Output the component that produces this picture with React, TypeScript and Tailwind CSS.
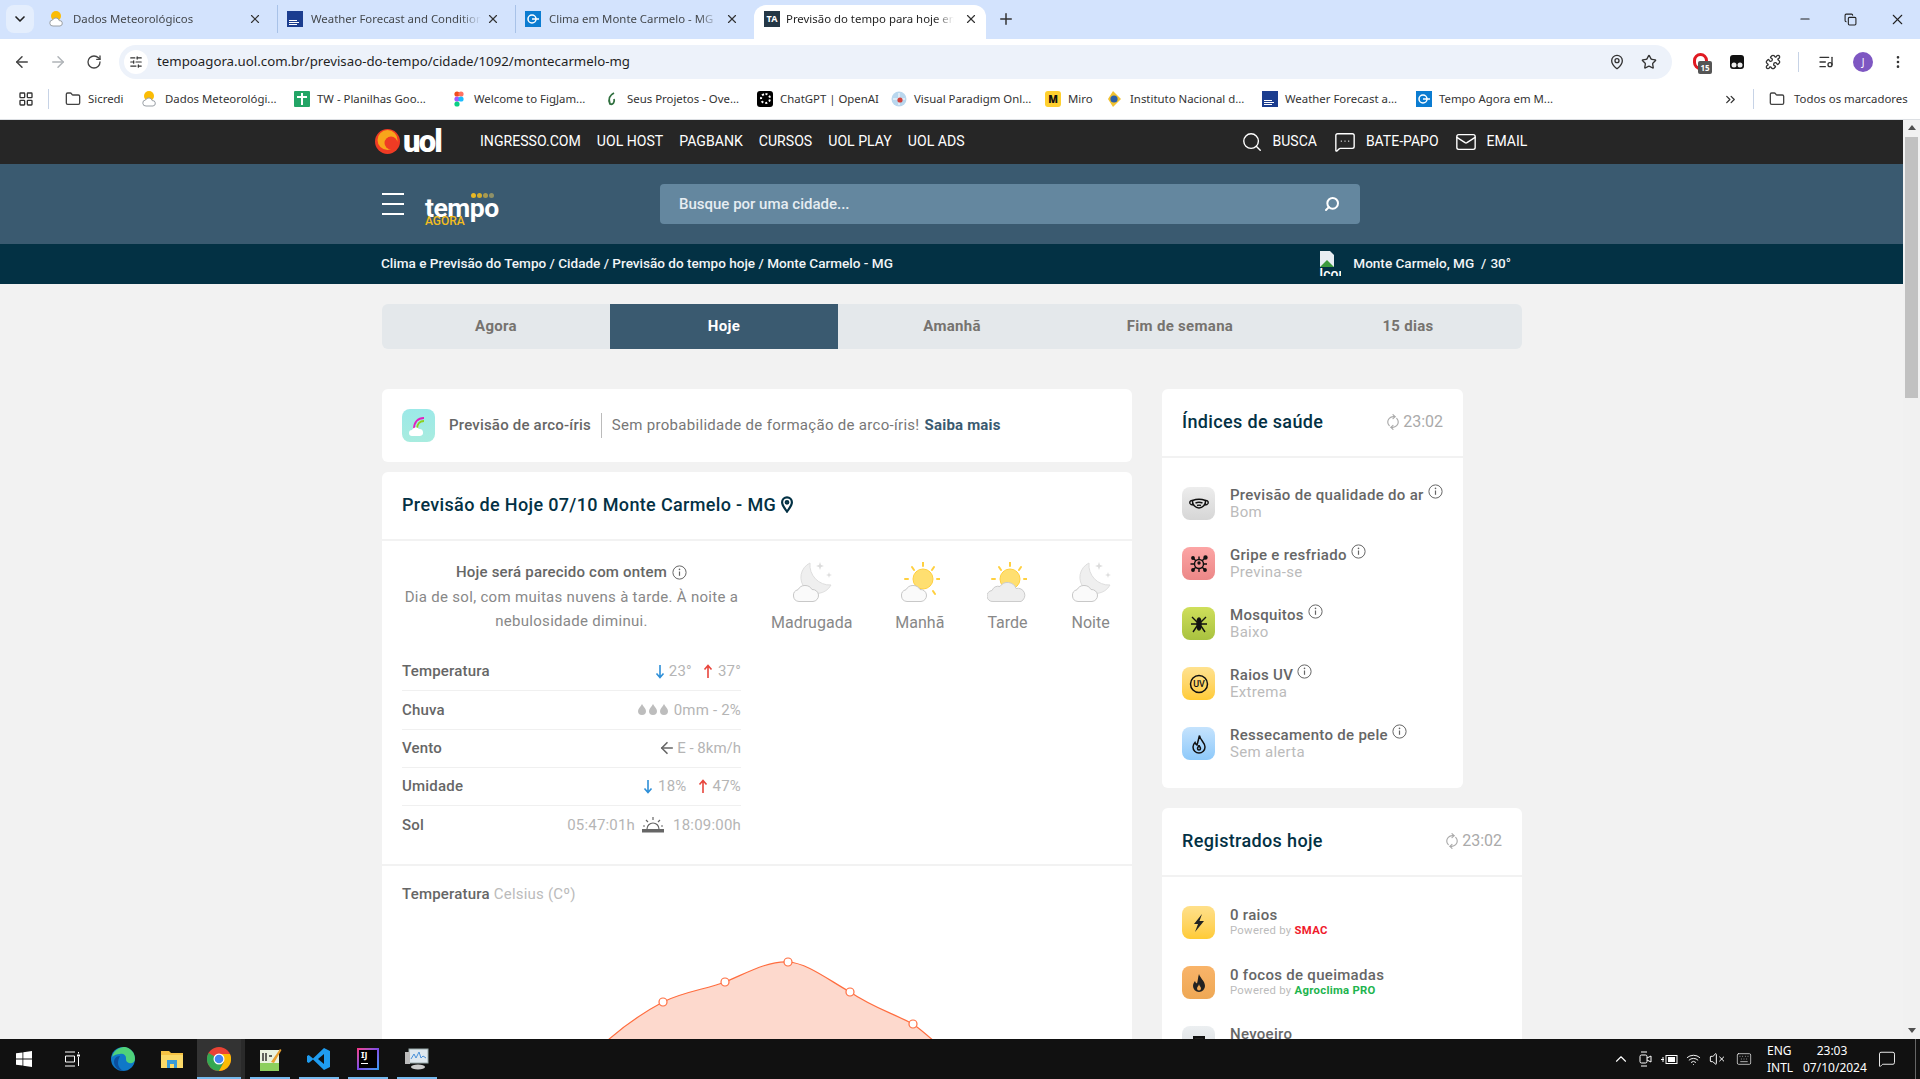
import {
  ArrowLeft, ArrowRight, ChevronDown, ChevronUp, ChevronsRight, Copy, EllipsisVertical, Folder, Keyboard,
  LayoutGrid, ListMusic, Mail, MapPin, MessageSquare, MessageSquareMore, Minus, Plus, Puzzle,
  RefreshCw, RotateCw, Search, SlidersHorizontal, Star, VolumeX, Wifi, X,
} from 'lucide-react';
import type { ReactNode } from 'react';

const SunCloudFavicon = () => (
  <svg className="w-4 h-4 shrink-0" viewBox="0 0 16 16">
    <circle cx="7" cy="5" r="5" fill="#fbbc04" />
    <path d="M4 15a3 3 0 0 1-.4-6 3.5 3.5 0 0 1 6.6.6A2.7 2.7 0 0 1 11 15z" fill="#fff" stroke="#9aa0a6" />
  </svg>
);

const TwcFavicon = () => (
  <span className="w-4 h-4 shrink-0 bg-[#1b3d8f] flex flex-col justify-end gap-px p-0.5">
    <span className="block h-px w-2 bg-white" />
    <span className="block h-px w-2.5 bg-white" />
    <span className="block h-px w-2 bg-white" />
  </span>
);

const TempoFavicon = () => (
  <svg className="w-4 h-4 shrink-0" viewBox="0 0 16 16">
    <rect width="16" height="16" fill="#0b7cd1" />
    <circle cx="7" cy="8" r="4" fill="none" stroke="#fff" strokeWidth="1.5" />
    <path d="M7 8h7" stroke="#fff" strokeWidth="1.5" />
  </svg>
);

const TaFavicon = () => (
  <span className="w-4 h-4 shrink-0 bg-[#243746] text-white text-[9px] leading-4 font-bold text-center">TA</span>
);

const tabs = [
  { title: 'Dados Meteorológicos', icon: <SunCloudFavicon /> },
  { title: 'Weather Forecast and Conditions', icon: <TwcFavicon /> },
  { title: 'Clima em Monte Carmelo - MG', icon: <TempoFavicon /> },
];

const ChromeTab = ({ title, icon }: { title: string; icon: ReactNode }) => (
  <div className="w-[238px] h-[28px] flex items-center pl-[9px] pr-[3px] border-r border-[#a8c2e8] [&:nth-child(3)]:border-r-0">
    {icon}
    <span className="ml-2 w-[170px] overflow-hidden whitespace-nowrap text-[11.4px] text-[#44484c] [mask-image:linear-gradient(to_right,black_88%,transparent)]">{title}</span>
    <X className="ml-auto mr-[12px] w-[14px] h-[14px] text-[#333]" />
  </div>
);

const bookmarks: { label: string; icon: ReactNode; width: string }[] = [
  { label: 'Sicredi', width: 'w-[77px]', icon: <Folder className="w-4 h-4 text-[#444] shrink-0" /> },
  { label: 'Dados Meteorológi...', width: 'w-[152px]', icon: <SunCloudFavicon /> },
  {
    label: 'TW - Planilhas Goo...',
    width: 'w-[157px]',
    icon: (
      <svg className="w-4 h-4 shrink-0" viewBox="0 0 16 16">
        <rect width="16" height="16" rx="1" fill="#23a566" />
        <path d="M8 2v12M3 6h10" stroke="#fff" strokeWidth="2" />
      </svg>
    ),
  },
  {
    label: 'Welcome to FigJam...',
    width: 'w-[153px]',
    icon: (
      <svg className="w-4 h-4 shrink-0" viewBox="0 0 16 16">
        <circle cx="6" cy="3" r="2.6" fill="#f24e1e" />
        <circle cx="10" cy="3" r="2.6" fill="#ff7262" />
        <circle cx="6" cy="8" r="2.6" fill="#a259ff" />
        <circle cx="10" cy="8" r="2.6" fill="#1abcfe" />
        <circle cx="6" cy="13" r="2.6" fill="#0acf83" />
      </svg>
    ),
  },
  {
    label: 'Seus Projetos - Ove...',
    width: 'w-[153px]',
    icon: (
      <svg className="w-4 h-4 shrink-0" viewBox="0 0 16 16">
        <path d="M10 2C6 4 4 8 6 13c3 1 5-2 4-5" fill="none" stroke="#2f6f3e" strokeWidth="1.8" />
      </svg>
    ),
  },
  {
    label: 'ChatGPT | OpenAI',
    width: 'w-[134px]',
    icon: (
      <span className="w-4 h-4 shrink-0 rounded-[3px] bg-black flex items-center justify-center">
        <span className="w-[11px] h-[11px] rounded-full border-2 border-dotted border-white" />
      </span>
    ),
  },
  {
    label: 'Visual Paradigm Onl...',
    width: 'w-[154px]',
    icon: (
      <svg className="w-4 h-4 shrink-0" viewBox="0 0 16 16">
        <circle cx="8" cy="8" r="7.5" fill="#b9d7ee" />
        <path d="M8 2v12M2 8h12" stroke="#fff" />
        <circle cx="9" cy="9" r="2.6" fill="#d0403c" />
      </svg>
    ),
  },
  {
    label: 'Miro',
    width: 'w-[62px]',
    icon: (
      <span className="w-4 h-4 shrink-0 rounded-[3px] bg-[#ffd02f] flex items-center justify-center">
        <span className="text-[10px] leading-none font-black text-[#111]">M</span>
      </span>
    ),
  },
  {
    label: 'Instituto Nacional d...',
    width: 'w-[155px]',
    icon: (
      <svg className="w-4 h-4 shrink-0" viewBox="0 0 16 16">
        <path d="M6 0l8 8-8 8-5-8z" fill="#f2c230" />
        <circle cx="7" cy="8" r="3.6" fill="#2b5fa8" />
      </svg>
    ),
  },
  { label: 'Weather Forecast a...', width: 'w-[154px]', icon: <TwcFavicon /> },
  { label: 'Tempo Agora em M...', width: 'w-[150px]', icon: <TempoFavicon /> },
];

const BrowserChrome = () => (
  <div className="shrink-0 [font-family:'Noto_Sans',sans-serif]">
    <div className="h-[39px] bg-[#d3e3fd] flex pt-[5px] relative">
      <div className="ml-[6px] w-[28px] h-[28px] rounded-lg bg-[#e4eefd] flex items-center justify-center">
        <ChevronDown className="w-4 h-4 text-[#222]" strokeWidth={2.5} />
      </div>
      <div className="ml-[6px] flex">
        {tabs.map((tab) => (
          <ChromeTab key={tab.title} {...tab} />
        ))}
      </div>
      <div className="w-[232px] h-[34px] bg-white rounded-t-xl flex items-center pl-[10px] pb-[6px]">
        <TaFavicon />
        <span className="ml-[6px] w-[168px] overflow-hidden whitespace-nowrap text-[11.4px] text-[#1f1f1f] [mask-image:linear-gradient(to_right,black_88%,transparent)]">
          Previsão do tempo para hoje em Monte
        </span>
        <X className="ml-[10px] w-[14px] h-[14px] text-[#333]" />
      </div>
      <Plus className="ml-[11px] mt-[5px] w-[18px] h-[18px] text-[#333]" />
      <div className="ml-auto flex items-center h-[28px] mr-[14px] gap-[32px] text-[#222]">
        <Minus className="w-[14px] h-[14px]" />
        <Copy className="w-[13px] h-[13px]" />
        <X className="w-[17px] h-[17px]" strokeWidth={1.5} />
      </div>
    </div>

    <div className="h-[46px] bg-white flex items-center">
      <ArrowLeft className="ml-[13px] w-[18px] h-[18px] text-[#444]" />
      <ArrowRight className="ml-[18px] w-[18px] h-[18px] text-[#b0b4b8]" />
      <RotateCw className="ml-[19px] w-[16px] h-[16px] text-[#444]" />
      <div className="ml-[17px] w-[1553px] h-[34px] rounded-full bg-[#edf2fa] flex items-center pl-[5px]">
        <span className="w-[24px] h-[24px] rounded-full bg-white flex items-center justify-center">
          <SlidersHorizontal className="w-[14px] h-[14px] text-[#333]" />
        </span>
        <span className="ml-[9px] text-[13.25px] text-[#1f1f1f]">tempoagora.uol.com.br/previsao-do-tempo/cidade/1092/montecarmelo-mg</span>
        <MapPin className="ml-auto w-[16px] h-[16px] text-[#333]" />
        <Star className="ml-[16px] mr-[15px] w-[16px] h-[16px] text-[#333]" />
      </div>
      <div className="ml-[21px] relative w-[18px] h-[18px]">
        <span className="block w-[15px] h-[17px] rounded-full border-[3px] border-[#e01a22]" />
        <span className="absolute left-[5px] top-[8px] w-[14px] h-[13px] rounded-[2px] bg-[#555] text-white text-[8px] leading-[13px] font-bold text-center">15</span>
      </div>
      <svg className="ml-[18px] w-[16px] h-[16px]" viewBox="0 0 16 16">
        <rect x="1" y="1" width="14" height="14" rx="3" fill="#111" />
        <circle cx="5" cy="11" r="2.5" fill="#eee" />
        <circle cx="11" cy="11" r="2.5" fill="#eee" />
      </svg>
      <Puzzle className="ml-[20px] w-[16px] h-[16px] text-[#333]" />
      <span className="ml-[17px] w-px h-[20px] bg-[#c7d3e6]" />
      <ListMusic className="ml-[19px] w-[16px] h-[16px] text-[#333]" />
      <span className="ml-[19px] w-[20px] h-[20px] rounded-full bg-[#7e57c2] text-white text-[10px] leading-5 text-center">J</span>
      <EllipsisVertical className="ml-[17px] w-[16px] h-[16px] text-[#333]" />
    </div>

    <div className="h-[35px] pb-[6px] bg-white border-b border-[#dcdfe3] flex items-center text-[11.4px] text-[#333]">
      <LayoutGrid className="ml-[18px] w-[16px] h-[16px] text-[#333]" />
      <span className="ml-[14px] w-px h-[20px] bg-[#c7d3e6]" />
      <div className="ml-[16px] flex">
        {bookmarks.map(({ label, width, icon }) => (
          <div key={label} className={`${width} flex items-center gap-[7px] whitespace-nowrap overflow-hidden`}>
            {icon}
            <span>{label}</span>
          </div>
        ))}
      </div>
      <ChevronsRight className="ml-[157px] w-[15px] h-[15px] text-[#333]" />
      <span className="ml-[15px] w-px h-[20px] bg-[#c7d3e6]" />
      <Folder className="ml-[15px] w-4 h-4 text-[#444]" />
      <span className="ml-[9px] whitespace-nowrap">Todos os marcadores</span>
    </div>
  </div>
);

const UolLogo = () => (
  <div className="flex items-center">
    <svg className="w-[25px] h-[25px]" viewBox="0 0 25 25">
      <circle cx="12.5" cy="12.5" r="12.5" fill="#ef3b24" />
      <circle cx="12.5" cy="11" r="10" fill="#f8a51b" />
      <circle cx="16" cy="14" r="6.5" fill="#ef3b24" />
    </svg>
    <span className="ml-[3px] text-[31px] leading-none font-black tracking-[-1.8px] text-white">uol</span>
  </div>
);

const UolBar = () => (
  <div className="h-[44px] pb-[1px] bg-[#262626] shrink-0 flex items-center text-white text-[14.1px] whitespace-nowrap pl-[375px]">
    <div className="w-[67px]">
      <UolLogo />
    </div>
    <div className="ml-[38px] flex gap-[16px]">
      {['INGRESSO.COM', 'UOL HOST', 'PAGBANK', 'CURSOS', 'UOL PLAY', 'UOL ADS'].map((item) => (
        <span key={item}>{item}</span>
      ))}
    </div>
    <div className="ml-[276px] flex items-center text-[14px]">
      <Search className="w-[22px] h-[22px]" strokeWidth={1.5} />
      <span className="ml-[10px]">BUSCA</span>
      <MessageSquareMore className="ml-[17px] w-[22px] h-[22px]" strokeWidth={1.5} />
      <span className="ml-[10px]">BATE-PAPO</span>
      <Mail className="ml-[16px] w-[22px] h-[22px]" strokeWidth={1.5} />
      <span className="ml-[10px]">EMAIL</span>
    </div>
  </div>
);

const TempoLogo = () => (
  <div className="relative w-[76px] h-[34px] ml-[21px] mt-[12px]">
    <span className="absolute left-[46px] top-0 flex gap-[1px]">
      <span className="w-[5px] h-[5px] rounded-full bg-[#e9b824]" />
      <span className="w-[5px] h-[5px] rounded-full bg-[#d5ad2c]" />
      <span className="w-[5px] h-[5px] rounded-full bg-[#a99a4e]" />
      <span className="w-[5px] h-[5px] rounded-full bg-[#8f9168]" />
    </span>
    <span className="absolute left-0 top-[1px] text-[26.5px] leading-[27px] font-bold tracking-[-0.5px] text-white">tempo</span>
    <span className="absolute left-0 top-[23px] text-[12px] leading-[11px] font-medium text-[#f3bd1e]">AGORA</span>
  </div>
);

const SiteHeader = () => (
  <>
    <div className="h-[80px] bg-[#3a5a70] shrink-0 flex items-center pl-[382px]">
      <div className="w-[22px] flex flex-col gap-[8px]">
        <span className="block h-[2px] bg-white" />
        <span className="block h-[2px] bg-white" />
        <span className="block h-[2px] bg-white" />
      </div>
      <TempoLogo />
      <div className="ml-[159px] w-[700px] h-[40px] rounded bg-[#64879f] flex items-center pl-[19px] pr-[20px]">
        <span className="text-[15px] font-medium text-[#e6edf2]">Busque por uma cidade...</span>
        <Search className="ml-auto w-[16px] h-[16px] text-white -scale-x-100" strokeWidth={3} />
      </div>
    </div>
    <div className="h-[40px] pb-[1px] bg-[#033144] shrink-0 flex items-center pl-[381px] text-[13.55px] font-medium text-[#f2f5f7] whitespace-nowrap">
      <span>Clima e Previsão do Tempo / Cidade / Previsão do tempo hoje / Monte Carmelo - MG</span>
      <div className="ml-auto mr-[392px] flex items-center">
        <div className="w-[22px] h-[25px] overflow-hidden">
          <svg className="w-[16px] h-[16px]" viewBox="0 0 16 16">
            <path d="M1 0h10l4 4v12H1z" fill="#e8edf2" />
            <path d="M1 16l7-7 7 7z" fill="#3d9a3d" />
          </svg>
          <span className="block text-[14px] leading-[14px] text-white">Icon</span>
        </div>
        <span className="ml-[12px]">Monte Carmelo, MG</span>
        <span className="ml-[7px]">/</span>
        <span className="ml-[4px]">30°</span>
      </div>
    </div>
  </>
);

const InfoIcon = () => (
  <svg className="w-[15px] h-[15px] shrink-0 text-[#666]" viewBox="0 0 15 15" fill="none" stroke="currentColor">
    <circle cx="7.5" cy="7.5" r="6.6" />
    <path d="M7.5 6.5v4.3" strokeWidth="1.2" />
    <circle cx="7.5" cy="4.4" r=".8" fill="currentColor" stroke="none" />
  </svg>
);

const SmallCloud = () => (
  <path
    d="M7 39.500a6 6 0 0 1-1-11.800A8 8 0 0 1 20 27.500a6 6 0 0 1 1 12z"
    fill="#fafafa"
    stroke="#c8c8c8"
    strokeWidth="1"
  />
);

const MoonIcon = () => (
  <svg className="w-[40px] h-[40px]" viewBox="0 0 40 40">
    <path d="M18 1A16 16 0 1 0 39 23A20 20 0 0 1 18 1z" fill="#efefef" stroke="#dedede" />
    <path d="M28 0l1 3 3 1-3 1-1 3-1-3-3-1 3-1zM37 10l.7 2.300 2.300.7-2.300.7-.7 2.300-.7-2.300-2.300-.7 2.300-.7z" fill="#dcdcdc" />
    <SmallCloud />
  </svg>
);

const SunIcon = ({ bigCloud }: { bigCloud?: boolean }) => (
  <svg className="w-[40px] h-[40px]" viewBox="0 0 40 40">
    <g stroke="#ffd040" strokeWidth="2" strokeLinecap="round">
      <path d="M23 0v4M12 5l2 3M34 5l-2 3M5 17h3M37 17h3M33 29l2 3" />
    </g>
    <circle cx="23" cy="17" r="10" fill="#ffdf70" stroke="#ffd040" />
    {bigCloud ? (
      <path
        d="M6 39.500a5.500 5.500 0 0 1-1-11 7 7 0 0 1 8-4 9 9 0 0 1 16 2 7 7 0 0 1 5 13z"
        fill="#eeeeee"
        stroke="#cccccc"
      />
    ) : (
      <SmallCloud />
    )}
  </svg>
);

const ArrowDown = () => (
  <svg className="w-[10px] h-[15px] shrink-0" viewBox="0 0 10 15" fill="none" stroke="#2e8fd8" strokeWidth="1.6">
    <path d="M5 1v12M1.500 9.500L5 13.500l3.500-4" />
  </svg>
);

const ArrowUp = () => (
  <svg className="w-[10px] h-[15px] shrink-0" viewBox="0 0 10 15" fill="none" stroke="#e8453c" strokeWidth="1.6">
    <path d="M5 14V2M1.500 5.500L5 1.500l3.500 4" />
  </svg>
);

const Drop = () => (
  <svg className="w-[8px] h-[11px]" viewBox="0 0 8 11">
    <path d="M4 0c1 2.500 4 4.500 4 7a4 4 0 0 1-8 0c0-2.500 3-4.500 4-7z" fill="#bdbdbd" />
  </svg>
);

const SunsetIcon = () => (
  <svg className="w-[22px] h-[16px] ml-[7px] mr-[9px] shrink-0" viewBox="0 0 22 16" fill="none" stroke="#666">
    <path d="M11 0v3M4 3l2 2M18 3l-2 2M1 9h2M19 9h2" strokeWidth="1.200" />
    <path d="M5 12a6 6 0 0 1 12 0" strokeWidth="1.200" />
    <rect x="0" y="12" width="22" height="3.500" fill="#666" stroke="none" />
  </svg>
);

const ForecastRow = ({ label, last, children }: { label: string; last?: boolean; children: ReactNode }) => (
  <div className={`h-[38.300px] flex items-center justify-between ${last ? '' : 'border-b border-[#f0f0f0]'}`}>
    <span className="text-[15px] font-medium tracking-[0.2px] text-[#666]">{label}</span>
    <div className="flex items-center text-[15px] text-[#b5b5b5] tracking-[0.2px]">{children}</div>
  </div>
);

const periods = [
  { label: 'Madrugada', icon: <MoonIcon /> },
  { label: 'Manhã', icon: <SunIcon /> },
  { label: 'Tarde', icon: <SunIcon bigCloud /> },
  { label: 'Noite', icon: <MoonIcon /> },
];

const chartPoints = [
  [281, 81],
  [343, 61],
  [406, 41],
  [468, 71],
  [531, 103],
];

const TemperatureChart = () => {
  const line = 'M165 190C200 135 245 100 281 81C300 71 325 68 343 61C365 52 385 40 406 41C425 42 445 58 468 71C490 86 510 92 531 103C555 120 600 165 640 200';
  return (
    <svg className="block w-[750px] h-[190px] mt-[15px]" viewBox="0 0 750 190">
      <path d={`${line}Z`} fill="#fdd9cd" />
      <path d={line} fill="none" stroke="#ff6d3f" strokeWidth="1.200" />
      {chartPoints.map(([x, y]) => (
        <circle key={x} cx={x} cy={y} r="4" fill="#fff" stroke="#ff6d3f" strokeWidth="1.200" />
      ))}
    </svg>
  );
};

const MainColumn = () => (
  <div className="w-[750px] shrink-0">
    <div className="h-[73px] bg-white rounded-md flex items-center pl-[20px]">
      <svg className="w-[33px] h-[33px] shrink-0" viewBox="0 0 33 33">
        <defs>
          <linearGradient id="rainbowBg" x1="0" y1="0" x2="0" y2="1">
            <stop offset="0" stopColor="#9ce9e8" />
            <stop offset="1" stopColor="#a8ecdf" />
          </linearGradient>
        </defs>
        <rect width="33" height="33" rx="8" fill="url(#rainbowBg)" />
        <path d="M12 20c0-7 4-11 10-11" fill="none" stroke="#e020c0" strokeWidth="2" />
        <path d="M15 20c0-5 3-8 7-8" fill="none" stroke="#8fd020" strokeWidth="2" />
        <path d="M10 27a3 3 0 0 1 0-6 4 4 0 0 1 7-1 3.500 3.500 0 0 1 1 7z" fill="#fff" />
      </svg>
      <span className="ml-[14px] text-[15px] font-medium tracking-[0.2px] text-[#666]">Previsão de arco-íris</span>
      <span className="ml-[10px] w-px h-[25px] bg-[#bbb]" />
      <span className="ml-[10px] text-[15px] text-[#777] tracking-[0.3px]">Sem probabilidade de formação de arco-íris!</span>
      <span className="ml-[5px] text-[15px] font-bold tracking-[0.2px] text-[#3a5a70]">Saiba mais</span>
    </div>

    <div className="mt-[10px] bg-white rounded-t-md">
      <div className="h-[69px] pb-[2px] flex items-center pl-[20px] border-b-2 border-[#f2f2f2]">
        <h1 className="text-[18px] font-medium tracking-[0.35px] text-[#033144]">Previsão de Hoje 07/10 Monte Carmelo - MG</h1>
        <svg className="ml-[5px] w-[12px] h-[17px]" viewBox="0 0 11 15" fill="none" stroke="#033144" strokeWidth="2">
          <path d="M5.500 14C3 10.500 1 8.500 1 5.500a4.500 4.500 0 0 1 9 0C10 8.500 8 10.500 5.500 14z" />
          <circle cx="5.500" cy="5.500" r="1.200" />
        </svg>
      </div>

      <div className="h-[325px] flex border-b-2 border-[#f2f2f2] pl-[20px]">
        <div className="w-[339px] shrink-0 pt-[19px]">
          <div className="h-[74px] text-center text-[15px] leading-[24.5px] text-[#888] tracking-[0.3px]">
            <p className="flex items-center justify-center gap-[5px] font-medium text-[#666] tracking-[0.2px]">
              Hoje será parecido com ontem
              <InfoIcon />
            </p>
            <p>Dia de sol, com muitas nuvens à tarde. À noite a nebulosidade diminui.</p>
          </div>
          <div className="mt-[19px]">
            <ForecastRow label="Temperatura">
              <ArrowDown />
              <span className="ml-[4px]">23°</span>
              <span className="ml-[11px]" />
              <ArrowUp />
              <span className="ml-[5px]">37°</span>
            </ForecastRow>
            <ForecastRow label="Chuva">
              <span className="flex gap-[3px]"><Drop /><Drop /><Drop /></span>
              <span className="ml-[6px]">0mm - 2%</span>
            </ForecastRow>
            <ForecastRow label="Vento">
              <ArrowLeft className="w-[18px] h-[18px] text-[#666]" strokeWidth={2.2} />
              <span className="ml-[1px] tracking-normal">E - 8km/h</span>
            </ForecastRow>
            <ForecastRow label="Umidade">
              <ArrowDown />
              <span className="ml-[5px]">18%</span>
              <span className="ml-[11px]" />
              <ArrowUp />
              <span className="ml-[5px]">47%</span>
            </ForecastRow>
            <ForecastRow label="Sol" last>
              <span>05:47:01h</span>
              <SunsetIcon />
              <span>18:09:00h</span>
            </ForecastRow>
          </div>
        </div>
        <div className="ml-[30px] pt-[21px] flex items-start gap-[43px]">
          {periods.map(({ label, icon }) => (
            <div key={label} className="flex flex-col items-center">
              {icon}
              <span className="mt-[9px] text-[16px] text-[#888]">{label}</span>
            </div>
          ))}
        </div>
      </div>

      <div className="pt-[17px] pl-[20px] text-[15px] tracking-[0.2px]">
        <span className="font-medium text-[#666]">Temperatura</span>
        <span className="ml-1 text-[#bbb]">Celsius (Cº)</span>
      </div>
      <TemperatureChart />
    </div>
  </div>
);

const HealthIcon = ({ tone, children }: { tone: string; children: ReactNode }) => (
  <span className={`w-[33px] h-[33px] shrink-0 rounded-lg flex items-center justify-center bg-gradient-to-b ${tone}`}>
    <svg className="w-[20px] h-[20px]" viewBox="0 0 20 20" fill="none" stroke="#111" strokeWidth="1.400">
      {children}
    </svg>
  </span>
);

const healthRows: { title: string; sub: string; tone: string; icon: ReactNode }[] = [
  {
    title: 'Previsão de qualidade do ar',
    sub: 'Bom',
    tone: 'from-[#ededed] to-[#d6d6d6]',
    icon: (
      <>
        <path d="M3.500 6.500c4-1.500 9-1.500 13 0 .5 4-3 7.500-6.500 7.500s-7-3.500-6.500-7.500z" strokeWidth="1.500" />
        <path d="M6.500 9c2.300-1 4.700-1 7 0M8 11.500c1.300-.5 2.700-.5 4 0" />
        <path d="M3.500 6.500C1 6.500.5 8 1 9.500c.5 1 2 1.500 3.500 1.500M16.500 6.500c2.500 0 3 1.500 2.500 3-.5 1-2 1.500-3.500 1.500" />
      </>
    ),
  },
  {
    title: 'Gripe e resfriado',
    sub: 'Previna-se',
    tone: 'from-[#fca5a5] to-[#ec8787]',
    icon: (
      <>
        <circle cx="10" cy="10" r="4.500" />
        <path d="M10 5.500V2.500M10 14.500V18M5.500 10H1.500M14.500 10H18M6.800 6.800L4 4M13.200 13.200L16 16M13.200 6.800L16.500 3.500M6.800 13.200L4 16" />
        <circle cx="16.500" cy="3.500" r="1.500" fill="#111" />
        <circle cx="4" cy="4" r="1.200" fill="#111" />
        <circle cx="4" cy="16" r="1.200" fill="#111" />
        <circle cx="16" cy="16" r="1.200" fill="#111" />
        <circle cx="10" cy="9" r="1" fill="#111" />
      </>
    ),
  },
  {
    title: 'Mosquitos',
    sub: 'Baixo',
    tone: 'from-[#cfdf5b] to-[#a9c23f]',
    icon: (
      <>
        <ellipse cx="10" cy="10" rx="2" ry="6" fill="#111" />
        <path d="M8 8L3 3M12 8l5-5M8 10H2M12 10h6M8 12l-4 6M12 12l4 6" />
      </>
    ),
  },
  {
    title: 'Raios UV',
    sub: 'Extrema',
    tone: 'from-[#ffe28f] to-[#ffcb33]',
    icon: (
      <>
        <circle cx="10" cy="10" r="8.500" strokeWidth="1.500" />
        <text x="10" y="13" fontSize="9" fontWeight="500" textAnchor="middle" fill="#111" stroke="none">UV</text>
      </>
    ),
  },
  {
    title: 'Ressecamento de pele',
    sub: 'Sem alerta',
    tone: 'from-[#c5e3fd] to-[#8dc9fa]',
    icon: <path d="M10.500 1.500C11 6 16 8.500 16 13a6 6 0 0 1-12 0c0-2 1-3.500 2-4.500.5 1.500 1 2 2 2.500 1-3 1.500-6 2.500-9.500zM10 11c0 1.500-1.500 2-1.500 3.500a1.500 1.500 0 0 0 3 0c0-1.500-1.500-2-1.500-3.500z" strokeWidth="1.500" />,
  },
];

const CardHeader = ({ title }: { title: string }) => (
  <div className="h-[69px] pb-[2px] flex items-center justify-between pl-[20px] pr-[20px] border-b-2 border-[#f2f2f2]">
    <h2 className="text-[18px] font-medium tracking-[0.35px] text-[#033144]">{title}</h2>
    <span className="flex items-center gap-[3px] text-[16px] text-[#aaa]">
      <RefreshCw className="w-[14px] h-[14px] -rotate-45" />
      23:02
    </span>
  </div>
);

const SideColumn = () => (
  <div className="ml-[30px] w-[360px] shrink-0">
    <div className="w-[301px] h-[399px] bg-white rounded-md">
      <CardHeader title="Índices de saúde" />
      <div className="pl-[20px] pt-[29px] flex flex-col gap-[27px]">
        {healthRows.map(({ title, sub, tone, icon }) => (
          <div key={title} className="flex items-center h-[33px]">
            <HealthIcon tone={tone}>{icon}</HealthIcon>
            <div className="ml-[15px] whitespace-nowrap">
              <div className="flex items-start gap-[4px] h-[17px] leading-[17px] text-[15px] font-medium tracking-[0.3px] text-[#666]">
                {title}
                <span className="-mt-[3px]"><InfoIcon /></span>
              </div>
              <div className="h-[17px] leading-[17px] text-[15px] tracking-[0.3px] text-[#bbb]">{sub}</div>
            </div>
          </div>
        ))}
      </div>
    </div>

    <div className="mt-[20px] bg-white rounded-t-md">
      <CardHeader title="Registrados hoje" />
      <div className="pl-[20px] pt-[29px] flex flex-col gap-[27px] pb-[30px]">
        <div className="flex items-center h-[33px]">
          <HealthIcon tone="from-[#ffe08a] to-[#ffcb33]">
            <path d="M13 1L5 11h4l-3 8 9-11h-4.500z" fill="#222" stroke="none" />
          </HealthIcon>
          <div className="ml-[15px]">
            <div className="h-[17px] leading-[17px] text-[15px] font-medium tracking-[0.3px] text-[#666]">0 raios</div>
            <div className="text-[11.300px] leading-[14px] tracking-[0.3px] text-[#bbb]">
              Powered by <span className="font-bold text-[#f01a2c]">SMAC</span>
            </div>
          </div>
        </div>
        <div className="flex items-center h-[33px]">
          <HealthIcon tone="from-[#f9b469] to-[#eea855]">
            <path d="M10 1c1 4 6 7 6 12a6 6 0 0 1-12 0c0-2 1-4 2-5 .5 1.500 1 2 2 2.500C9 7 9 4 10 1z" fill="#222" stroke="none" />
            <path d="M10 11c0 2-2 2.500-2 4.500a2 2 0 0 0 4 0c0-2-2-2.500-2-4.500z" fill="#eea855" stroke="none" />
          </HealthIcon>
          <div className="ml-[15px]">
            <div className="h-[17px] leading-[17px] text-[15px] font-medium tracking-[0.3px] text-[#666]">0 focos de queimadas</div>
            <div className="text-[11.300px] leading-[14px] tracking-[0.3px] text-[#bbb]">
              Powered by <span className="font-bold text-[#1db44e]">Agroclima PRO</span>
            </div>
          </div>
        </div>
        <div className="flex items-start h-[33px]">
          <HealthIcon tone="from-[#eceff1] to-[#d5d9dc]">
            <path d="M5 4h10v3H5zM3 10h14M3 14h14" fill="#222" strokeWidth="2" />
          </HealthIcon>
          <div className="ml-[15px]">
            <div className="h-[17px] leading-[17px] text-[15px] font-medium tracking-[0.3px] text-[#666]">Nevoeiro</div>
          </div>
        </div>
      </div>
    </div>
  </div>
);

const PageBody = () => (
  <div className="pl-[382px] pt-[20px]">
    <div className="w-[1140px] h-[45px] bg-[#e4e8eb] rounded-md overflow-hidden grid grid-cols-5">
      {['Agora', 'Hoje', 'Amanhã', 'Fim de semana', '15 dias'].map((tab) => (
        <div
          key={tab}
          className={`flex items-center justify-center text-[15px] font-bold tracking-[0.3px] ${tab === 'Hoje' ? 'bg-[#3a5a70] text-white' : 'text-[#76736f]'}`}
        >
          {tab}
        </div>
      ))}
    </div>
    <div className="mt-[40px] flex items-start">
      <MainColumn />
      <SideColumn />
    </div>
  </div>
);

const Scrollbar = () => (
  <div className="w-[17px] shrink-0 bg-[#f1f1f1] flex flex-col items-center">
    <span className="mt-[5px] w-0 h-0 border-x-[4px] border-x-transparent border-b-[5px] border-b-[#505050]" />
    <span className="mt-[7px] w-[13px] h-[261px] bg-[#c1c1c1]" />
    <span className="mt-auto mb-[6px] w-0 h-0 border-x-[4px] border-x-transparent border-t-[5px] border-t-[#505050]" />
  </div>
);

const TaskSlot = ({ width, active, running, children }: { width: string; active?: boolean; running?: boolean; children: ReactNode }) => (
  <div className={`${width} h-[40px] relative flex items-center justify-center ${active ? 'bg-[#333]' : ''}`}>
    {children}
    {running && <span className="absolute left-0 right-0 bottom-0 h-[2px] bg-[#76b9ed]" />}
  </div>
);

const Taskbar = () => (
  <div className="h-[40px] bg-[#111] shrink-0 flex items-center text-white [font-family:'Noto_Sans',sans-serif]">
    <TaskSlot width="w-[48px]">
      <svg className="w-[16px] h-[16px]" viewBox="0 0 16 16" fill="#fff">
        <path d="M0 2.300l6.500-.9v6.200H0zM7.300 1.300L16 0v7.600H7.300zM0 8.400h6.500v6.200L0 13.700zM7.300 8.400H16V16l-8.700-1.300z" />
      </svg>
    </TaskSlot>
    <TaskSlot width="w-[48px]">
      <svg className="w-[16px] h-[16px]" viewBox="0 0 16 16" fill="none" stroke="#fff">
        <path d="M1 1h10M1 15h10M1.500 5h9v6h-9zM14.500 1v1.500M14.500 6v9" />
        <rect x="13" y="3.500" width="3" height="2" fill="#fff" stroke="none" />
      </svg>
    </TaskSlot>
    <TaskSlot width="w-[54px]">
      <svg className="w-[24px] h-[24px]" viewBox="0 0 24 24">
        <circle cx="12" cy="12" r="12" fill="#0f78c8" />
        <path d="M1 10C3 2 10 0 14 0c6 1 10 6 10 12 0 3-3 5-6 4-3-1-3-3-3-5 0-3-3-5-6-4-3 0-6 1-8 3z" fill="#4fd27a" />
        <path d="M9 9c-4 0-6 3-6 6 0 5 5 9 10 9-3-1-6-4-6-8 0-3 1-5 2-7z" fill="#0b4f9e" />
      </svg>
    </TaskSlot>
    <TaskSlot width="w-[47px]">
      <svg className="w-[22px] h-[18px] -ml-[3px]" viewBox="0 0 22 18">
        <path d="M0 1h8l2 2h12v15H0z" fill="#f6c244" />
        <path d="M0 5h22v13H0z" fill="#fbd968" />
        <path d="M6 10h10v8h-3v-4H9v4H6z" fill="#3a9bd8" />
      </svg>
    </TaskSlot>
    <TaskSlot width="w-[44px]" active running>
      <svg className="w-[24px] h-[24px]" viewBox="0 0 24 24">
        <circle cx="12" cy="12" r="12" fill="#ea4335" />
        <path d="M12 12L1.600 18A12 12 0 0 1 1.600 6z" fill="#34a853" />
        <path d="M12 24A12 12 0 0 1 1.600 18L7 12h5l5 3z" fill="#34a853" />
        <path d="M12 24a12 12 0 0 0 11-17H12l5 8z" fill="#fbbc04" />
        <circle cx="12" cy="12" r="5.500" fill="#fff" />
        <circle cx="12" cy="12" r="4.300" fill="#4285f4" />
      </svg>
    </TaskSlot>
    <span className="w-[4px] h-[40px] bg-[#2a2a2a]" />
    <div className="ml-[5px] flex gap-[9px]">
      <TaskSlot width="w-[40px]" running>
        <svg className="w-[24px] h-[24px]" viewBox="0 0 24 24">
          <path d="M2 3h19v21H2z" fill="#e9f2df" />
          <path d="M2 16h19v8H2z" fill="#8ccf5e" />
          <path d="M5 6v8M8 6v8M11 9h3" stroke="#333" strokeWidth="1.500" />
          <path d="M13 15L22 2l1.500 1L16 16z" fill="#e8a030" />
        </svg>
      </TaskSlot>
      <TaskSlot width="w-[40px]" running>
        <svg className="w-[24px] h-[24px]" viewBox="0 0 24 24">
          <path d="M17 1l6 3v16l-6 3-11-10.500L1.800 16 0 15V9l1.800-1L6 11.500z" fill="#1f9cf0" />
          <path d="M17 7l-6 5 6 5z" fill="#111" />
        </svg>
      </TaskSlot>
      <TaskSlot width="w-[40px]" running>
        <span className="w-[22px] h-[22px] bg-gradient-to-br from-[#fc2f84] via-[#7b49e8] to-[#1b9ff0] p-[2px] block">
          <span className="w-full h-full bg-black block text-[9px] leading-[10px] font-bold pl-[2px]">
            IJ
            <span className="block w-[7px] h-px mt-[3px] bg-white" />
          </span>
        </span>
      </TaskSlot>
      <TaskSlot width="w-[40px]" running>
        <svg className="w-[24px] h-[22px]" viewBox="0 0 24 22">
          <rect x="4" y="1" width="19" height="14" fill="#dfe8ef" stroke="#9aa" />
          <path d="M6 11l3-5 2 4 3-6 2 6 2-2 3 2" fill="none" stroke="#4a90d9" />
          <rect x="0" y="4" width="5" height="12" fill="#bbb" />
          <ellipse cx="13" cy="19" rx="7" ry="2.500" fill="#ccc" />
        </svg>
      </TaskSlot>
    </div>
    <div className="ml-auto flex items-center text-xs">
      <span className="w-[24px] flex justify-center"><ChevronUp className="w-[18px] h-[18px]" strokeWidth={1.5} /></span>
      <span className="w-[24px] flex justify-center">
        <svg className="w-[13px] h-[16px]" viewBox="0 0 13 16" fill="none" stroke="#fff">
          <rect x="1" y="4" width="7" height="8" rx="1.500" />
          <path d="M8 7l4-2v6l-4-2M2 1h6M2 15h6" />
        </svg>
      </span>
      <span className="w-[24px] flex justify-center">
        <svg className="w-[17px] h-[11px]" viewBox="0 0 17 11" fill="none" stroke="#fff">
          <rect x="5" y="1.500" width="11" height="8" />
          <rect x="7" y="3" width="7" height="5" fill="#fff" stroke="none" />
          <path d="M0 5.500h3M2 3v5" />
        </svg>
      </span>
      <span className="w-[24px] flex justify-center"><Wifi className="w-[15px] h-[15px]" strokeWidth={1.5} /></span>
      <span className="w-[24px] flex justify-center"><VolumeX className="w-[16px] h-[16px]" strokeWidth={1.5} /></span>
      <span className="w-[30px] flex justify-center"><Keyboard className="w-[24px] h-[16px]" strokeWidth={1} /></span>
      <div className="ml-[8px] w-[36px] text-xs leading-[17px]">
        <div>ENG</div>
        <div>INTL</div>
      </div>
      <div className="w-[58px] text-xs leading-[17px] text-center whitespace-nowrap">
        <div>23:03</div>
        <div>07/10/2024</div>
      </div>
      <span className="w-[52px] flex justify-center"><MessageSquare className="w-[18px] h-[18px]" strokeWidth={1.2} /></span>
      <span className="ml-[2px] w-px h-[40px] bg-[#666]" />
      <span className="w-[4px]" />
    </div>
  </div>
);

export default function App() {
  return (
    <div className="h-[1079px] w-[1920px] overflow-hidden flex flex-col bg-[#f2f2f2] [font-family:Roboto,sans-serif]">
      <BrowserChrome />
      <div className="flex-1 min-h-0 flex overflow-hidden">
        <div className="flex-1 min-w-0 overflow-hidden flex flex-col">
          <UolBar />
          <SiteHeader />
          <PageBody />
        </div>
        <Scrollbar />
      </div>
      <Taskbar />
    </div>
  );
}
